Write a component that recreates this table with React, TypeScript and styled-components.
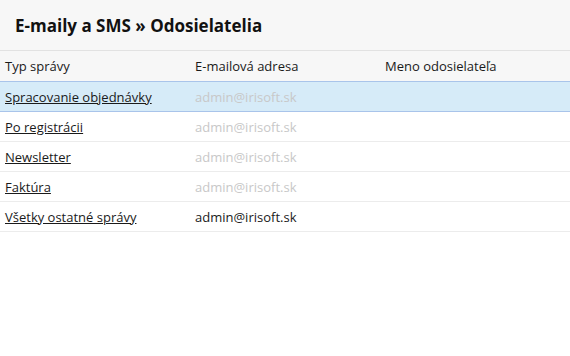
import React from "react";
import styled, { createGlobalStyle } from "styled-components";

const GlobalStyle = createGlobalStyle`
  html, body {
    margin: 0;
    padding: 0;
    background: #ffffff;
    font-family: "Open Sans", "Liberation Sans", sans-serif;
    color: #1a1a1a;
  }
`;

const Page = styled.div`
  width: 570px;
`;

const TitleBar = styled.div`
  background: #f7f7f7;
  border-bottom: 1px solid #e2e2e2;
  height: 51px;
  display: flex;
  align-items: center;
  padding: 0 15px;
  box-sizing: border-box;
  h1 {
    margin: 0;
    font-size: 17px;
    font-weight: 700;
    color: #111;
  }
`;

const Table = styled.table`
  width: 100%;
  border-collapse: collapse;
  table-layout: fixed;
  font-size: 13px;
  th {
    background: #f7f7f7;
    font-weight: 400;
    text-align: left;
    height: 30px;
    padding: 0 5px;
    color: #1a1a1a;
  }
  td {
    height: 29px;
    padding: 0 5px;
    border-bottom: 1px solid #ececec;
  }
  a {
    color: #1a1a1a;
    text-decoration: underline;
  }
`;

const Row = styled.tr<{ $active?: boolean }>`
  td {
    background: ${(p) => (p.$active ? "#d6ebf8" : "transparent")};
    border-bottom-color: ${(p) => (p.$active ? "#a9c4ea" : "#ececec")};
    border-top: ${(p) => (p.$active ? "1px solid #a9c4ea" : "none")};
  }
`;

const Email = styled.span<{ $muted?: boolean }>`
  color: ${(p) => (p.$muted ? "#c8c8c8" : "#1a1a1a")};
`;

const senders = [
  { type: "Spracovanie objednávky", email: "admin@irisoft.sk", muted: true, active: true },
  { type: "Po registrácii", email: "admin@irisoft.sk", muted: true },
  { type: "Newsletter", email: "admin@irisoft.sk", muted: true },
  { type: "Faktúra", email: "admin@irisoft.sk", muted: true },
  { type: "Všetky ostatné správy", email: "admin@irisoft.sk", muted: false },
];

const App = () => {
  return (
    <Page>
      <GlobalStyle />
      <TitleBar>
        <h1>E-maily a SMS » Odosielatelia</h1>
      </TitleBar>
      <Table>
        <thead>
          <tr>
            <th>Typ správy</th>
            <th>E-mailová adresa</th>
            <th>Meno odosielateľa</th>
          </tr>
        </thead>
        <tbody>
          {senders.map((s) => (
            <Row key={s.type} $active={s.active}>
              <td>
                <a href="#">{s.type}</a>
              </td>
              <td>
                <Email $muted={s.muted}>{s.email}</Email>
              </td>
              <td></td>
            </Row>
          ))}
        </tbody>
      </Table>
    </Page>
  );
};

export default App;
